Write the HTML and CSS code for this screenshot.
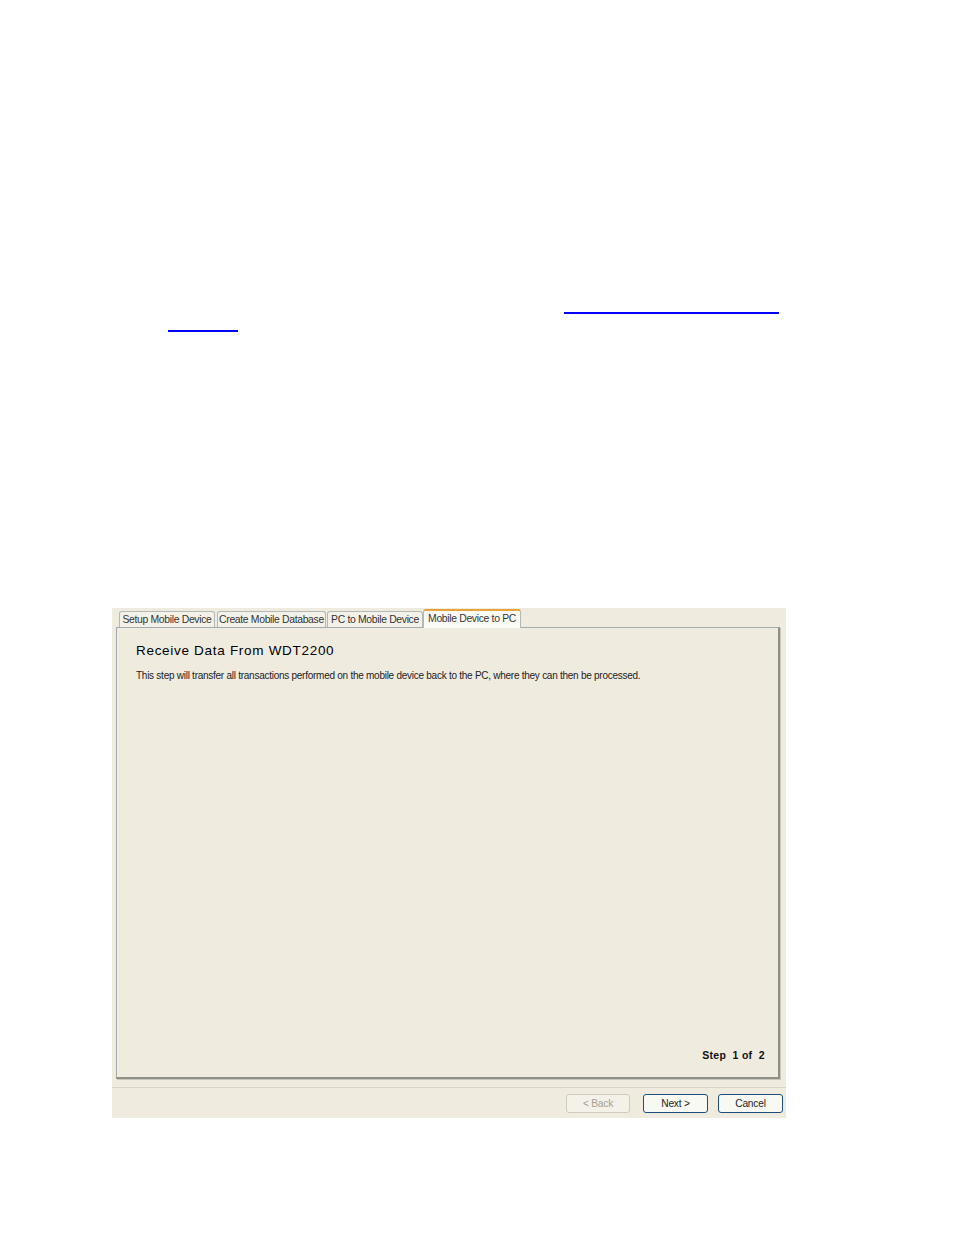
FILE: index.html
```html
<!DOCTYPE html>
<html lang="en">
<head>
<meta charset="utf-8">
<title>Receive Data From WDT2200</title>
<link rel="stylesheet" href="styles.css">
</head>
<body>
<main class="doc">
  <div class="rule rule-first"></div>
  <div class="rule rule-second"></div>
  <section class="dialog">
    <div class="tabs">
      <div class="tab tab-setup">Setup Mobile Device</div>
      <div class="tab tab-create">Create Mobile Database</div>
      <div class="tab tab-pc">PC to Mobile Device</div>
      <div class="tab tab-active">Mobile Device to PC</div>
    </div>
    <div class="panel">
      <h1 class="title">Receive Data From WDT2200</h1>
      <p class="desc">This step will transfer all transactions performed on the mobile device back to the PC, where they can then be processed.</p>
      <div class="step">Step&nbsp; 1 of&nbsp; 2</div>
    </div>
    <div class="footer">
      <button class="btn btn-back" disabled>&lt; Back</button>
      <button class="btn btn-next">Next &gt;</button>
      <button class="btn btn-cancel">Cancel</button>
    </div>
  </section>
</main>
</body>
</html>
```
FILE: styles.css
```css
html, body { margin: 0; background: #fff; }
body { font-family: "Liberation Sans", Arial, sans-serif; color: #111; }
.doc { width: 954px; height: 1235px; padding-top: 312px; box-sizing: border-box; overflow: hidden; }
.rule { height: 2px; background: #0000ff; }
.rule-first { width: 215px; margin-left: 564px; }
.rule-second { width: 70px; margin: 16px 0 0 168px; }
.dialog { width: 674px; height: 510px; margin: 276px 0 0 112px; background: #efebdf; display: flex; flex-direction: column; }
.tabs { height: 19px; padding-left: 7px; display: flex; align-items: flex-end; }
.tab { box-sizing: border-box; height: 16px; font-size: 10.4px; letter-spacing: -0.33px; line-height: 15px; text-align: center; white-space: nowrap; background: #f4f2e8; border: 1px solid #b4b9b8; border-bottom: 0; border-radius: 3px 3px 0 0; color: #333; }
.tab-setup { width: 96px; margin-right: 2px; }
.tab-create { width: 109px; margin-right: 1px; }
.tab-pc { width: 96px; }
.tab-active { width: 98px; height: 19px; line-height: 15px; background: #fbfbf6; border-top: 2px solid #e8a33a; position: relative; z-index: 1; margin-bottom: -1px; }
.panel { box-sizing: border-box; width: 664px; height: 452px; margin-left: 4px; padding: 15px 14px 0 19px; border: 1px solid #a3abb0; border-right: 2px solid #8f8f88; border-bottom: 2px solid #8f8f88; box-shadow: 1px 1px 0 #c9c7bc; display: flex; flex-direction: column; }
.title { margin: 0; font-size: 13.5px; line-height: 16px; font-weight: 400; letter-spacing: 0.7px; color: #000; }
.desc { margin: 10px 0 0; font-size: 10px; letter-spacing: -0.26px; line-height: 13px; color: #222; }
.step { margin-top: auto; margin-bottom: 15px; text-align: right; font-size: 10.5px; line-height: 13px; font-weight: 700; letter-spacing: 0.3px; color: #111; transform: translateX(1px); }
.footer { box-sizing: border-box; flex: 1; margin-top: 8px; padding: 6px 3px 0 454px; border-top: 1px solid #d8d4c6; display: flex; align-items: flex-start; }
.btn { box-sizing: border-box; height: 19px; padding: 0; font: 10.2px "Liberation Sans", Arial, sans-serif; letter-spacing: -0.2px; background: #f9f9f4; border: 1px solid #1c4f7e; border-radius: 3px; color: #222; }
.btn-back { width: 64px; margin-right: 13px; border-color: #cfccbd; color: #a3a196; background: #f3f1e8; }
.btn-next { width: 65px; margin-right: 10px; }
.btn-cancel { width: 65px; }
```
